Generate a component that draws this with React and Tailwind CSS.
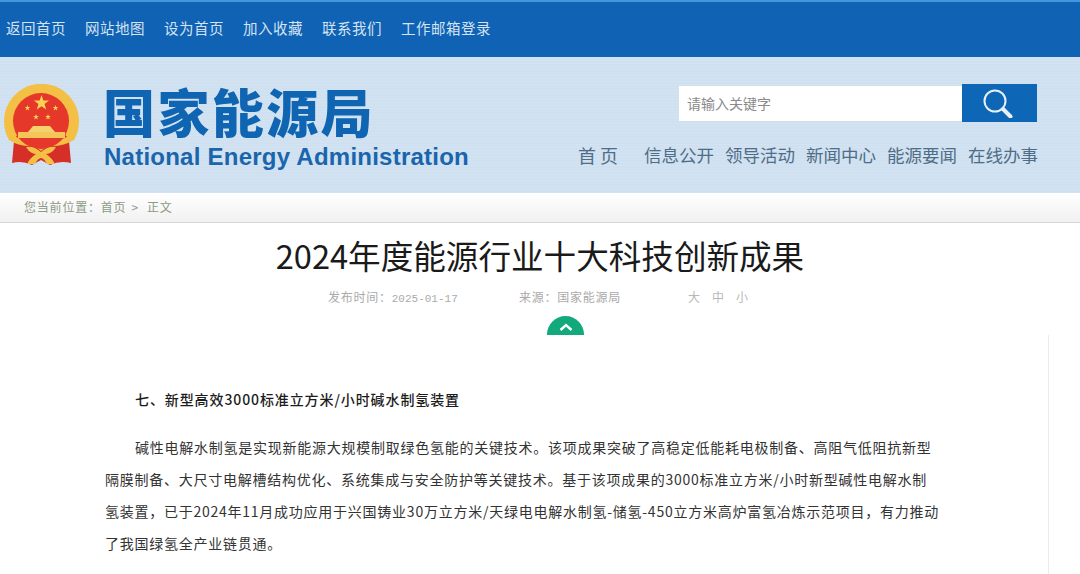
const cjk = "font-['Noto_Sans_CJK_SC','Noto_Sans',sans-serif]";

function Emblem() {
  const s = (cx, cy, r) => {
    const pts = [];
    for (let i = 0; i < 10; i++) {
      const a = -Math.PI / 2 + (i * Math.PI) / 5;
      const q = i % 2 ? r * 0.4 : r;
      pts.push(`${cx + q * Math.cos(a)},${cy + q * Math.sin(a)}`);
    }
    return pts.join(" ");
  };
  return (
    <svg width="78" height="84" viewBox="0 0 78 84" className="shrink-0">
      <path d="M12 57 L10 79 Q20 76 30 81 L39 76 L48 81 Q58 76 69 79 L67 57 Z" fill="#d62f28" />
      <path d="M7 56 A37.5 37.5 0 1 1 72 56 Q62 62 50 62 Q44 62 39 67 Q34 62 28 62 Q16 62 7 56 Z" fill="#f3bf45" />
      <circle cx="39" cy="37" r="28" fill="#e5372a" />
      <path d="M14 53 Q26 59 39 58 Q52 59 65 53 L62 49 H16 Z" fill="#e5372a" />
      <path d="M31 42 H48 L53 48 H26 Z" fill="#f6d06a" />
      <rect x="16" y="48" width="47" height="6" fill="#f4c558" />
      <polygon points={s(39.5, 19, 8)} fill="#f7d254" />
      <polygon points={s(25.5, 24, 3)} fill="#f7d254" />
      <polygon points={s(53.5, 24, 3)} fill="#f7d254" />
      <polygon points={s(34, 33, 3)} fill="#f7d254" />
      <polygon points={s(46, 33, 3)} fill="#f7d254" />
      <path d="M24 63 Q32 62 39 68 Q46 62 54 63 Q50 70 44 70 Q50 74 53 80 H45 Q42 74 39 74 Q36 74 33 80 H25 Q28 74 34 70 Q28 70 24 63 Z" fill="#f3bf45" />
    </svg>
  );
}

function SearchGlyph() {
  return (
    <svg width="30" height="30" viewBox="0 0 30 30" fill="none">
      <circle cx="12" cy="13" r="10.5" stroke="#e6f0f8" strokeWidth="2" />
      <path d="M20 21 L27.5 28.5" stroke="#e6f0f8" strokeWidth="4" strokeLinecap="round" />
    </svg>
  );
}

export default function App() {
  const top = ["返回首页", "网站地图", "设为首页", "加入收藏", "联系我们", "工作邮箱登录"];
  const nav = ["信息公开", "领导活动", "新闻中心", "能源要闻", "在线办事"];
  return (
    <div className={`w-[1080px] h-[574px] overflow-hidden bg-white ${cjk}`}>
      <div className="h-[57px] bg-[#0f62b4] border-t-[2px] border-[#3f97dc] flex items-center pl-[6px] pb-[2px] gap-[19px]">
        {top.map((t) => (
          <span key={t} className="text-[14.5px] tracking-[0.5px] text-[#d5e3f2] font-normal leading-none">
            {t}
          </span>
        ))}
      </div>

      <header className="h-[136px] bg-[repeating-linear-gradient(0deg,#d3e3f2_0,#d3e3f2_1px,#cfe0f1_1px,#cfe0f1_3px)] flex">
        <div className="pl-[2px] pt-[27px]">
          <Emblem />
        </div>
        <div className="ml-[23px] pt-[23px]">
          <div className="text-[52px] leading-[62px] font-black tracking-[2.4px] text-[#0f65b2] whitespace-nowrap">
            国家能源局
          </div>
          <div className="ml-[1px] font-['Liberation_Sans',sans-serif] font-bold text-[24px] leading-[26px] mt-[2px] tracking-[0.24px] text-[#1a65ac] whitespace-nowrap">
            National Energy Administration
          </div>
        </div>
        <div className="ml-auto pr-[42px] flex flex-col items-end">
          <div className="mt-[27px] mr-[1px] flex items-center">
            <div className="w-[283px] h-[35px] bg-white flex items-center pl-[8px] text-[14px] text-[#8a8a8a]">
              请输入关键字
            </div>
            <div className="w-[75px] h-[38px] bg-[#0d66b6] flex items-center justify-center pr-[4px]">
              <SearchGlyph />
            </div>
          </div>
          <nav className="mt-[21px] flex items-center text-[#4f6d86] text-[17.5px] leading-[24px] whitespace-nowrap">
            <span className="text-[18px] mr-[26px] font-normal">首&nbsp;页</span>
            <div className="flex gap-[11px]">
              {nav.map((n) => (
                <span key={n} className="font-normal">{n}</span>
              ))}
            </div>
          </nav>
        </div>
      </header>

      <div className="h-[30px] bg-gradient-to-b from-white to-[#f1f1f1] border-b border-[#d5d5d5] pl-[24px] pb-[2px] flex items-center text-[12px] tracking-[0.8px] text-[#8d9a85] font-normal whitespace-nowrap">
        <span>您当前位置：首页</span>
        <span className="ml-[5px]">&gt;</span>
        <span className="ml-[8px]">正文</span>
      </div>

      <main>
        <h1 className="text-center text-[32.6px] leading-[44px] font-normal text-[#1a1a1a] mt-[10px] whitespace-nowrap">
          2024年度能源行业十大科技创新成果
        </h1>
        <div className="mt-[12px] flex pl-[328px] text-[12px] leading-[16px] text-[#aaaaaa] font-normal whitespace-nowrap">
          <span className="w-[191px] tracking-[0.75px]">
            发布时间：<span className="font-['Liberation_Mono',monospace] text-[11px] tracking-normal">2025-01-17</span>
          </span>
          <span className="w-[169px] tracking-[0.75px]">来源：国家能源局</span>
          <span className="tracking-[12px] text-[#b8b8b8]">大中小</span>
        </div>
        <div className="flex pl-[547px] mt-[9px]">
          <div className="w-[37px] h-[19px] rounded-t-[19px] bg-[#12a97c] flex items-end justify-center pb-[4px]">
            <svg width="14" height="8" viewBox="0 0 14 8" fill="none">
              <path d="M1.5 7 L7 2 L12.5 7" stroke="#fff" strokeWidth="2.4" />
            </svg>
          </div>
        </div>
        <article className="w-[1049px] h-[239px] border-r border-[#ececec] pl-[105px] pr-[108px] pt-[48px] text-[14px] text-[#333]">
          <p className="pl-[30px] text-[#1c1c1c] font-medium leading-[32px] tracking-[0.9px] whitespace-nowrap">
            七、新型高效3000标准立方米/小时碱水制氢装置
          </p>
          <div className="mt-[16px] w-[840px] leading-[32px] tracking-[0.75px]">
            <p className="pl-[30px] whitespace-nowrap">碱性电解水制氢是实现新能源大规模制取绿色氢能的关键技术。该项成果突破了高稳定低能耗电极制备、高阻气低阻抗新型</p>
            <p className="whitespace-nowrap">隔膜制备、大尺寸电解槽结构优化、系统集成与安全防护等关键技术。基于该项成果的3000标准立方米/小时新型碱性电解水制</p>
            <p className="whitespace-nowrap">氢装置，已于2024年11月成功应用于兴国铸业30万立方米/天绿电电解水制氢-储氢-450立方米高炉富氢冶炼示范项目，有力推动</p>
            <p className="whitespace-nowrap">了我国绿氢全产业链贯通。</p>
          </div>
        </article>
      </main>
    </div>
  );
}
